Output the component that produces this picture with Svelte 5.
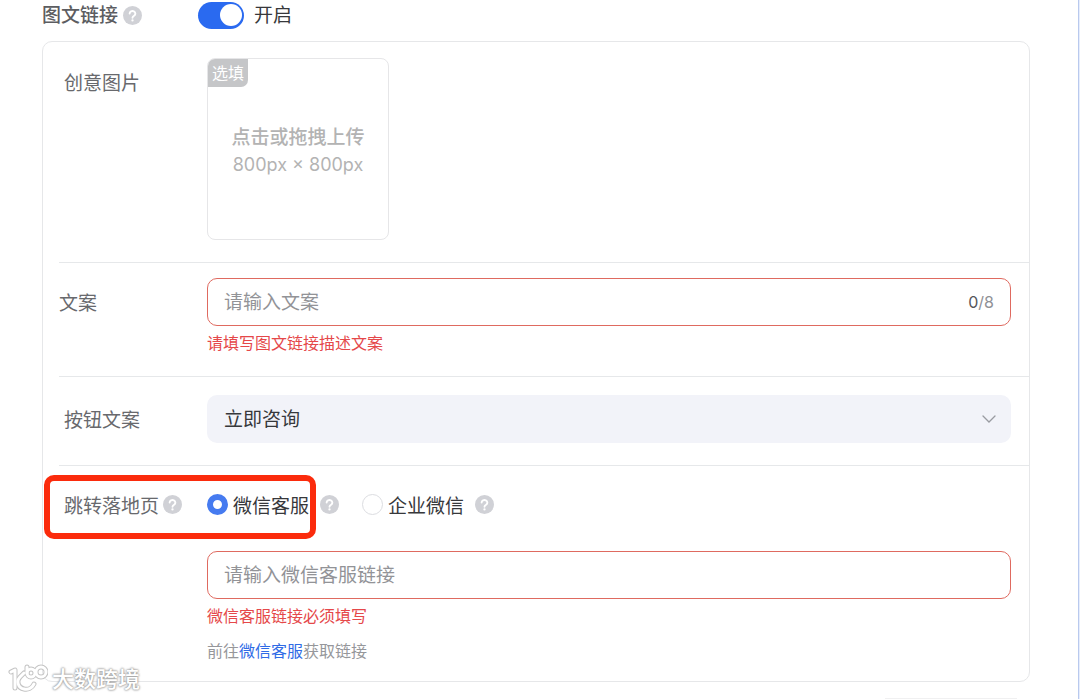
<script>
  let enabled = true;
  let copy = "";
  let buttonText = "立即咨询";
  let landing = "service";
  let link = "";

  const maxLength = 8;
  const buttonTexts = ["立即咨询", "了解更多", "立即领取"];
  const landings = [
    { value: "service", name: "微信客服" },
    { value: "work", name: "企业微信" },
  ];
</script>

{#snippet help(text)}
  <button type="button" class="help" aria-label={text}>
    <svg viewBox="0 0 18 18" width="19" height="19">
      <circle cx="9" cy="9" r="9" fill="#d0d1d6" />
      <path
        d="M6.3 7.2a2.7 2.5 0 1 1 4.2 2.1C9.5 9.9 9 10.2 9 11.2"
        fill="none"
        stroke="#fff"
        stroke-width="1.8"
        stroke-linecap="round"
      />
      <circle cx="9" cy="13.7" r="1.1" fill="#fff" />
    </svg>
  </button>
{/snippet}

<main class="page">
  <header class="head">
    <div class="head-label">
      <label for="enabled">图文链接</label>
      {@render help("图文链接说明")}
    </div>
    <input id="enabled" class="switch" type="checkbox" role="switch" bind:checked={enabled} />
    <span class="state">{enabled ? "开启" : "关闭"}</span>
  </header>

  <form class="card">
    <div class="row">
      <div class="label indent"><span>创意图片</span></div>
      <div class="control">
        <button type="button" class="upload">
          <span class="badge">选填</span>
          <strong>点击或拖拽上传</strong>
          <span>800px × 800px</span>
        </button>
      </div>
    </div>

    <div class="row">
      <div class="label"><label for="copy">文案</label></div>
      <div class="control">
        <div class="field">
          <input id="copy" type="text" placeholder="请输入文案" maxlength={maxLength} bind:value={copy} />
          <span class="count"><b>{copy.length}</b>/{maxLength}</span>
        </div>
        <p class="error">请填写图文链接描述文案</p>
      </div>
    </div>

    <div class="row">
      <div class="label indent"><label for="button-text">按钮文案</label></div>
      <div class="control">
        <div class="select">
          <select id="button-text" bind:value={buttonText}>
            {#each buttonTexts as text}
              <option>{text}</option>
            {/each}
          </select>
          <svg viewBox="0 0 14 8" width="14" height="8">
            <path d="M1 1l6 6 6-6" fill="none" stroke="#999ba1" stroke-width="1.3" stroke-linecap="round" />
          </svg>
        </div>
      </div>
    </div>

    <div class="row landing">
      <div class="label indent">
        <span>跳转落地页</span>
        {@render help("跳转落地页说明")}
      </div>
      <div class="control">
        <div class="radios">
          {#each landings as item}
            <div class="radio">
              <label>
                <input type="radio" name="landing" value={item.value} bind:group={landing} />
                {item.name}
              </label>
              {@render help(item.name + "说明")}
            </div>
          {/each}
        </div>
        <div class="field">
          <input type="text" aria-label="微信客服链接" placeholder="请输入微信客服链接" bind:value={link} />
        </div>
        <p class="error">微信客服链接必须填写</p>
        <p class="hint">前往<a href="#service">微信客服</a>获取链接</p>
      </div>
      <div class="highlight"></div>
    </div>
  </form>

  <div class="next"></div>

  <div class="watermark">
    <svg viewBox="0 0 40 30" width="40" height="30">
      <g fill="none" stroke-linecap="round" stroke-linejoin="round">
        {#each [["#c4c4c4", 5], ["#fff", 3]] as [color, width]}
          <g stroke={color} stroke-width={width}>
            <path d="M3 8l4-2v18" />
            <path d="M16 9l-4 4c-4 4-2 11 4 12 4 1 8-1 10-5" />
            <path d="M19 3v6" />
            <circle cx="23" cy="9" r="4" />
            <circle cx="33" cy="8" r="5" />
          </g>
        {/each}
      </g>
    </svg>
    <span>大数跨境</span>
  </div>
</main>

<style>
  :global(body) {
    margin: 0;
    background: #fff;
  }

  .page {
    position: relative;
    box-sizing: border-box;
    min-height: 100vh;
    padding: 2px 49px 0 42px;
    overflow: hidden;
    border-right: 1px solid #e6edfc;
    box-shadow: inset -1px 0 #b9c9ee;
    color: #37383b;
    font-family: "Inter", "Noto Sans CJK SC", sans-serif;
    font-size: 19px;
  }

  button,
  input,
  select {
    font: inherit;
    color: inherit;
  }

  p {
    margin: 0;
  }

  .head {
    display: flex;
    align-items: center;
    height: 27px;
    margin-bottom: 12px;
    line-height: 25px;
  }

  .head-label {
    display: flex;
    align-items: center;
    gap: 5px;
    width: 156px;
    color: #5c5d61;
    font-weight: 500;
  }

  .help {
    display: flex;
    padding: 0;
    border: 0;
    background: none;
    cursor: pointer;
  }

  .switch {
    appearance: none;
    width: 46px;
    height: 27px;
    margin: 0 10px 0 0;
    border-radius: 14px;
    background: #c9ccd3;
    cursor: pointer;
  }

  .switch::before {
    content: "";
    display: block;
    width: 22px;
    height: 22px;
    margin: 2px;
    border-radius: 50%;
    background: #fff;
  }

  .switch:checked {
    background: #2a6af0;
  }

  .switch:checked::before {
    margin-left: 22px;
  }

  .card {
    padding-left: 16px;
    border: 1px solid #e6e7e9;
    border-radius: 10px;
  }

  .row {
    display: flex;
    padding: 16px 18px 22px 0;
  }

  .row + .row {
    border-top: 1px solid #e6e8ea;
  }

  .row:nth-child(2) {
    padding: 15px 18px 21px 0;
  }

  .row:nth-child(3) {
    padding-top: 18px;
  }

  .row.landing {
    position: relative;
    padding: 15px 18px 18px 0;
  }

  .label {
    display: flex;
    flex: none;
    align-items: center;
    gap: 4px;
    box-sizing: border-box;
    width: 148px;
    height: 46px;
    color: #68696d;
    white-space: nowrap;
  }

  .indent {
    padding-left: 5px;
  }

  .control {
    flex: 1;
    min-width: 0;
  }

  .upload {
    position: relative;
    display: flex;
    flex-direction: column;
    align-items: center;
    justify-content: center;
    width: 182px;
    height: 182px;
    padding: 3px 0 0;
    border: 1px solid #e6e6e8;
    border-radius: 8px;
    background: #fff;
    color: #b3b3b3;
    font-size: 18px;
    line-height: 27px;
    cursor: pointer;
  }

  .upload strong {
    font-size: 19px;
    font-weight: 500;
  }

  .badge {
    position: absolute;
    top: 0;
    left: 0;
    padding: 1px 4px 0;
    border-radius: 7px 0;
    background: #c5c6c8;
    color: #fff;
    font-size: 16px;
  }

  .field {
    display: flex;
    align-items: center;
    box-sizing: border-box;
    height: 48px;
    padding: 0 16px;
    border: 1px solid #df6a60;
    border-radius: 10px;
  }

  .field input {
    flex: 1;
    min-width: 0;
    padding: 0;
    border: 0;
    outline: 0;
    background: none;
  }

  .field input::placeholder {
    color: #929397;
    opacity: 1;
  }

  .count {
    color: #909196;
    font-size: 16px;
  }

  .count b {
    color: #55565a;
    font-weight: 400;
  }

  .error,
  .hint {
    font-size: 16px;
    line-height: 24px;
  }

  .error {
    margin-top: 5px;
    color: #e5484a;
  }

  .hint {
    margin-top: 11px;
    color: #96979b;
  }

  .hint a {
    color: #2f6be6;
    text-decoration: none;
  }

  .select {
    display: grid;
    align-items: center;
  }

  .select select {
    grid-area: 1 / 1;
    appearance: none;
    height: 48px;
    padding: 0 17px;
    border: 0;
    border-radius: 10px;
    background: #f2f3f9;
  }

  .select svg {
    grid-area: 1 / 1;
    justify-self: end;
    margin-right: 15px;
    pointer-events: none;
  }

  .radios {
    display: flex;
    gap: 23px;
    height: 46px;
    margin-bottom: 24px;
  }

  .radio {
    display: flex;
    align-items: center;
    gap: 11px;
  }

  .radio label {
    display: flex;
    align-items: center;
    gap: 5px;
  }

  .radio input {
    appearance: none;
    box-sizing: border-box;
    width: 21px;
    height: 21px;
    margin: 0;
    border: 1px solid #dcdde1;
    border-radius: 50%;
    background: #fff;
  }

  .radio input:checked {
    border: 6px solid #467bf0;
  }

  .highlight {
    position: absolute;
    top: 9px;
    left: -15px;
    box-sizing: border-box;
    width: 272px;
    height: 64px;
    border: 6px solid #fb2b0c;
    border-radius: 10px;
    pointer-events: none;
  }

  .next {
    width: 132px;
    height: 1px;
    margin: 16px 13px 0 auto;
    background: #f0f0f1;
  }

  .watermark {
    position: absolute;
    bottom: 4px;
    left: 8px;
    display: flex;
    align-items: center;
    gap: 4px;
    color: #fff;
    font-size: 22px;
    font-weight: 500;
    line-height: 32px;
    text-shadow:
      0 0 2px #999,
      0 0 2px #aaa,
      0 0 3px #bbb;
  }
</style>
